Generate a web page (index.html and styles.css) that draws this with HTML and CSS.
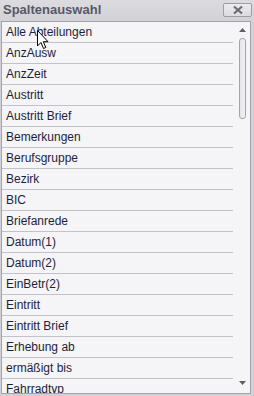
FILE: index.html
```html
<!DOCTYPE html>
<html>
<head>
<meta charset="utf-8">
<link rel="stylesheet" href="styles.css">
</head>
<body>
<div class="window">
  <div class="titlebar">
    <span class="title">Spaltenauswahl</span>
    <span class="close"><svg width="12" height="10" viewBox="0 0 12 10"><path d="M2 1.5 L10 8.5 M10 1.5 L2 8.5" stroke="#6b6b73" stroke-width="2.2" fill="none"/></svg></span>
  </div>
  <div class="listbox">
    <div class="list">
      <div class="row">Alle Abteilungen</div>
      <div class="row">AnzAusw</div>
      <div class="row">AnzZeit</div>
      <div class="row">Austritt</div>
      <div class="row">Austritt Brief</div>
      <div class="row">Bemerkungen</div>
      <div class="row">Berufsgruppe</div>
      <div class="row">Bezirk</div>
      <div class="row">BIC</div>
      <div class="row">Briefanrede</div>
      <div class="row">Datum(1)</div>
      <div class="row">Datum(2)</div>
      <div class="row">EinBetr(2)</div>
      <div class="row">Eintritt</div>
      <div class="row">Eintritt Brief</div>
      <div class="row">Erhebung ab</div>
      <div class="row">ermäßigt bis</div>
      <div class="row">Fahrradtyp</div>
    </div>
    <div class="scrollbar">
      <div class="arrow up"><svg width="7" height="4" viewBox="0 0 7 4"><path d="M3.5 0 L7 4 L0 4 Z" fill="#5f5f66"/></svg></div>
      <div class="thumb"></div>
      <div class="track"></div>
      <div class="arrow down"><svg width="7" height="4" viewBox="0 0 7 4"><path d="M0 0 L7 0 L3.5 4 Z" fill="#5f5f66"/></svg></div>
    </div>
  </div>
  <svg class="cursor" width="13" height="20" viewBox="0 0 13 20"><path d="M0.5 0.5 L0.5 16 L4 12.5 L6.5 18.5 L8.8 17.5 L6.3 11.7 L11 11.7 Z" fill="#ffffff" stroke="#000000" stroke-width="1" stroke-linejoin="miter"/></svg>
</div>
</body>
</html>
```
FILE: styles.css
```css
html, body {
  margin: 0;
  padding: 0;
}
body {
  background: #d3d3d7;
  font-family: "Liberation Sans", Arial, sans-serif;
}
.window {
  position: relative;
  height: 396px;
  display: flex;
  flex-direction: column;
  background: linear-gradient(#dcdce0, #d2d2d6 21px, #d2d2d6);
}
.titlebar {
  height: 21px;
  display: flex;
  align-items: flex-start;
  justify-content: space-between;
  padding: 0 2px 0 3px;
  box-sizing: border-box;
}
.title {
  font-family: "Liberation Sans", Arial, sans-serif;
  font-weight: bold;
  font-size: 13px;
  color: #575767;
  line-height: 20px;
}
.close {
  margin-top: 3px;
  width: 29px;
  height: 14px;
  box-sizing: border-box;
  border: 1px solid #9e9ea6;
  border-radius: 2px;
  background: linear-gradient(#ececef, #dcdce0);
  display: flex;
  align-items: center;
  justify-content: center;
}
.listbox {
  margin: 0 3px 0 1px;
  height: 373px;
  box-sizing: border-box;
  border: 1px solid #a3a3ab;
  background: #f5f5f7;
  display: flex;
  overflow: hidden;
}
.list {
  width: 231px;
  flex: none;
}
.row {
  height: 20px;
  line-height: 20px;
  border-bottom: 1px solid #c2c2ca;
  padding-left: 4px;
  font-family: "Liberation Sans", Arial, sans-serif;
  font-size: 12px;
  color: #1e1e3a;
  white-space: nowrap;
}
.scrollbar {
  flex: 1;
  display: flex;
  flex-direction: column;
  align-items: center;
  padding-left: 1px;
}
.arrow {
  height: 16px;
  display: flex;
  align-items: center;
  justify-content: center;
}
.arrow.down {
  height: 20px;
}
.thumb {
  width: 7px;
  height: 81px;
  box-sizing: border-box;
  border: 1px solid #a4a4ac;
  border-radius: 3px;
  background: linear-gradient(90deg, #e6e6ea, #f2f2f4);
}
.track {
  flex: 1;
}
.cursor {
  position: absolute;
  left: 37px;
  top: 30px;
}
```
